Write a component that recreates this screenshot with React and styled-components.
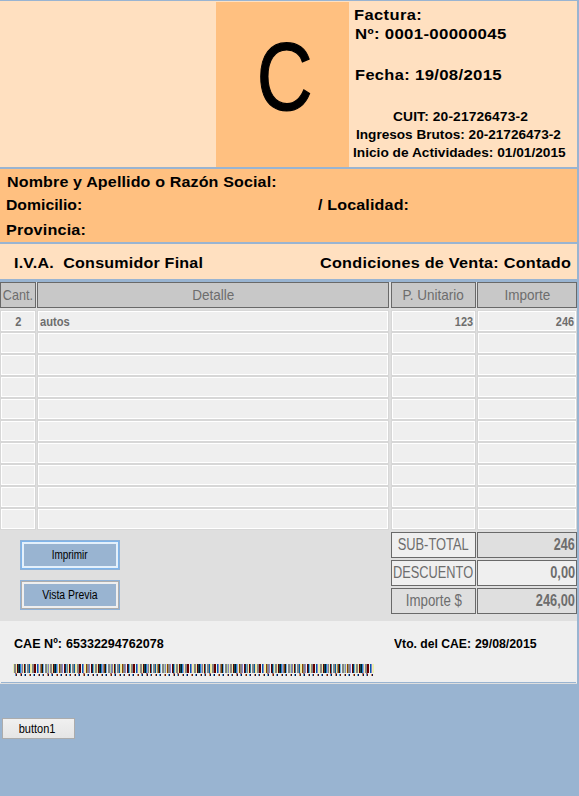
import React from 'react';
import styled, { createGlobalStyle } from 'styled-components';

const Global = createGlobalStyle`
  * { box-sizing: border-box; }
  body { margin: 0; background: #99b4d1; }
`;

const Page = styled.main`
  width: 579px;
  height: 796px;
  overflow: hidden;
  background: #99b4d1;
  font-family: 'Liberation Sans', Arial, sans-serif;
  color: #000;
`;

const Invoice = styled.div`
  width: 577px;
  padding-top: 1px;
`;

const Text = styled.span`
  display: block;
  flex: none;
  white-space: pre;
  font-size: ${p => p.$size || 15}px;
  font-weight: ${p => (p.$regular ? 400 : 700)};
  letter-spacing: ${p => p.$spacing || 0}px;
  transform: scaleX(${p => p.$scale || 1});
  transform-origin: ${p => p.$origin || 'left'} center;
`;

const Letter = styled(Text)`
  -webkit-text-stroke: 1.2px #000;
`;

const Header = styled.header`
  display: grid;
  grid-template-columns: 216px 133px 1fr;
  height: 166px;
  background: #ffe0c0;
`;

const LetterBox = styled.div`
  margin-top: 1px;
  padding: 20px 0 0 4px;
  background: #ffc080;
  display: flex;
  justify-content: center;
  line-height: 110px;
`;

const HeaderInfo = styled.div`
  padding-top: 5px;
`;

const Line = styled.div`
  display: flex;
  height: 18px;
  line-height: 18px;
  margin-top: ${p => p.$gap || 0}px;
  padding-left: ${p => p.$indent || 0}px;
`;

const Slot = styled.div`
  width: ${p => p.$width}px;
  flex: none;
`;

const Customer = styled.section`
  height: 75px;
  border-top: 2px solid #99b4d1;
  padding-top: 4px;
  background: #ffc080;
`;

const Terms = styled.section`
  height: 37px;
  border-top: 2px solid #99b4d1;
  padding-top: 10px;
  background: #ffe0c0;
`;

const Lower = styled.div`
  margin-top: 3px;
  background: #dfdfdf;
`;

const GridRow = styled.div`
  display: grid;
  grid-template-columns: 36px 352px 85px 100px;
  column-gap: 1px;
  justify-content: space-between;
  color: #6d6d6d;
`;

const TableHead = styled(GridRow)`
  height: 28px;
`;

const HeadCell = styled.div`
  height: 26px;
  border: 1px solid #696969;
  background: #c8c8c8;
  display: flex;
  justify-content: center;
  line-height: 24px;
`;

const Cell = styled.div`
  height: 22px;
  border: 1px solid #d7d7d7;
  box-shadow: inset 0 0 0 1px #fff;
  background: #efefef;
  display: flex;
  justify-content: ${p => p.$align || 'flex-start'};
  padding: 0 2px;
  line-height: 22px;
`;

const Summary = styled.div`
  display: flex;
  justify-content: space-between;
  height: 91px;
  padding: 2px 0 0 20px;
`;

const Actions = styled.div`
  padding-top: 8px;
  display: grid;
  grid-auto-rows: 30px;
  row-gap: 10px;
  width: 100px;
  align-content: start;
`;

const ActionButton = styled.button`
  appearance: none;
  font: inherit;
  color: #000;
  padding: 0;
  display: flex;
  justify-content: center;
  align-items: center;
  border: 1px solid #8fb2d8;
  background: #99b4d1;
  box-shadow: inset 0 0 0 1px ${p => (p.$focused ? '#7eb4ea' : '#adadad')},
    inset 0 0 0 3px ${p => (p.$focused ? '#e4f0fb' : '#efefef')};
  line-height: 26px;
`;

const Totals = styled.div`
  width: 186px;
  display: grid;
  grid-template-columns: 85px 100px;
  grid-auto-rows: 26px;
  gap: 2px 1px;
  align-content: start;
`;

const TotalCell = styled.div`
  border: 1px solid #696969;
  background: ${p => (p.$dim ? '#dfdfdf' : '#efefef')};
  color: #6d6d6d;
  display: flex;
  justify-content: ${p => (p.$right ? 'flex-end' : 'center')};
  padding-right: ${p => (p.$right ? 1 : 0)}px;
  line-height: 24px;
`;

const Footer = styled.footer`
  height: 63px;
  background: #efefef;
  padding-top: 14px;
  border-bottom: 1px solid #dfdfdf;
`;

const Barcode = styled.svg`
  display: block;
  margin: 11px 0 0 13px;
`;

const FooterRule = styled.div`
  height: 1px;
  margin: 6px 1px 0;
  background: #99b4d1;
`;

const PlainButton = styled.button`
  appearance: none;
  font: inherit;
  color: #000;
  display: flex;
  justify-content: center;
  width: 73px;
  height: 21px;
  margin: 34px 0 0 2px;
  padding: 0 2px 0 0;
  border: 1px solid #acacac;
  background: linear-gradient(#f0f0f0, #e5e5e5);
  line-height: 20px;
`;

// Each digit spans 4.5px: two digits share one nine-pixel group of stripes.
const stripes = [
  ['#e8eeae', '#858585', '#858585', '#f0efaa', '#620000', '#174a50', '#00172b', '#1889c8', '#a29cdf'],
  ['#efefaf', '#858585', '#858585', '#650000', '#650000', '#efefef', '#0060a8', '#8781ce', '#f2efb0'],
  ['#858585', '#8b4300', '#00172b', '#70b6e5', '#efefef', '#858585', '#858585', '#b1d5a3', '#8781ce'],
  ['#858585', '#efefaf', '#650000', '#287d98', '#efefef', '#858585', '#858585', '#005ca6', '#e9e5a0'],
  ['#efefaf', '#8b4300', '#858585', '#858585', '#8781ce', '#f2f2f2', '#650000', '#00345b', '#66b0dc'],
];
const order = [0, 3, 1, 2, 0, 4, 3, 1, 4, 0, 2, 3, 4, 1, 0, 3, 2, 4, 0, 1];

const BarcodeGraphic = () => (
  <Barcode width="361" height="12" shapeRendering="crispEdges" aria-label="65332294762078">
    {Array.from({ length: 361 }, (_, x) => (
      <rect key={x} x={x} width="1" height="9" fill={stripes[order[Math.floor(x / 9) % 20]][x % 9]} />
    ))}
    {Array.from({ length: 80 }, (_, i) => {
      const x = Math.round(i * 4.5) + 2;
      return (
        <g key={i}>
          <rect x={x} y="10" width="1" height="2" fill={i % 2 ? '#c88a5c' : '#52a1d8'} />
          <rect x={x + 1} y="10" width="1" height="2" fill={i % 3 ? '#10103e' : '#5a1a10'} />
          {i % 7 < 2 && <rect x={x} y="9" width="2" height="1" fill="#a76d70" />}
        </g>
      );
    })}
  </Barcode>
);

const rows = [{ qty: '2', detail: 'autos', unit: '123', amount: '246' }, ...Array(9).fill({})];

const ItemRow = ({ item }) => (
  <GridRow>
    <Cell $align="center"><Text $size={12} $scale={0.92} $origin="center">{item.qty}</Text></Cell>
    <Cell><Text $size={12} $scale={0.93}>{item.detail}</Text></Cell>
    <Cell $align="flex-end"><Text $size={12} $scale={0.91} $origin="right">{item.unit}</Text></Cell>
    <Cell $align="flex-end"><Text $size={12} $scale={0.91} $origin="right">{item.amount}</Text></Cell>
  </GridRow>
);

const Total = ({ label, value, scale, valueScale, dimLabel, dimValue }) => (
  <>
    <TotalCell $dim={dimLabel}><Text $regular $size={16} $scale={scale} $origin="center">{label}</Text></TotalCell>
    <TotalCell $right $dim={dimValue}><Text $size={16} $scale={valueScale} $origin="right">{value}</Text></TotalCell>
  </>
);

export default function App() {
  return (
    <Page>
      <Global />
      <Invoice>
        <Header>
          <div />
          <LetterBox><Letter $regular $size={96} $scale={0.806} $origin="center">C</Letter></LetterBox>
          <HeaderInfo>
            <Line $indent={5}><Text $scale={1.1} $spacing={0.35}>Factura:</Text></Line>
            <Line $gap={1} $indent={6}><Text $scale={1.12} $spacing={0.28}>Nº: 0001-00000045</Text></Line>
            <Line $gap={23} $indent={6}>
              <Slot $width={60}><Text $scale={1.09} $spacing={0.36}>Fecha:</Text></Slot>
              <Text $scale={1.12} $spacing={0.26}>19/08/2015</Text>
            </Line>
            <Line $gap={24} $indent={44}><Text $size={13} $scale={1.06} $spacing={0.12}>CUIT: 20-21726473-2</Text></Line>
            <Line $indent={7}><Text $size={13} $scale={1.046}>Ingresos Brutos: 20-21726473-2</Text></Line>
            <Line $indent={4}><Text $size={13} $scale={1.054}>Inicio de Actividades: 01/01/2015</Text></Line>
          </HeaderInfo>
        </Header>
        <Customer>
          <Line $indent={7}><Text $scale={1.07} $spacing={0.13}>Nombre y Apellido o Razón Social:</Text></Line>
          <Line $gap={5} $indent={6}>
            <Slot $width={312}><Text $scale={1.05}>Domicilio:</Text></Slot>
            <Text $scale={1.07} $spacing={0.15}>/ Localidad:</Text>
          </Line>
          <Line $gap={7} $indent={6}><Text $scale={1.08} $spacing={0.16}>Provincia:</Text></Line>
        </Customer>
        <Terms>
          <Line $indent={14}>
            <Slot $width={306}><Text $scale={1.07} $spacing={0.2}>{'I.V.A.  Consumidor Final'}</Text></Slot>
            <Text $scale={1.08} $spacing={0.23}>Condiciones de Venta: Contado</Text>
          </Line>
        </Terms>
        <Lower>
          <TableHead>
            <HeadCell><Text $regular $scale={0.84} $origin="center">Cant.</Text></HeadCell>
            <HeadCell><Text $regular $scale={0.9} $origin="center">Detalle</Text></HeadCell>
            <HeadCell><Text $regular $scale={0.9} $origin="center">P. Unitario</Text></HeadCell>
            <HeadCell><Text $regular $scale={0.9} $origin="center">Importe</Text></HeadCell>
          </TableHead>
          {rows.map((item, i) => <ItemRow key={i} item={item} />)}
          <Summary>
            <Actions>
              <ActionButton $focused><Text $regular $size={12} $scale={0.83} $origin="center">Imprimir</Text></ActionButton>
              <ActionButton><Text $regular $size={12} $scale={0.87} $origin="center">Vista Previa</Text></ActionButton>
            </Actions>
            <Totals>
              <Total label="SUB-TOTAL" value="246" scale={0.803} valueScale={0.784} dimValue />
              <Total label="DESCUENTO" value="0,00" scale={0.8} valueScale={0.8} />
              <Total label="Importe $" value="246,00" scale={0.83} valueScale={0.8} dimLabel dimValue />
            </Totals>
          </Summary>
        </Lower>
        <Footer>
          <Line $indent={14}>
            <Slot $width={52}><Text $size={12} $scale={1.05}>CAE Nº:</Text></Slot>
            <Slot $width={328}><Text $size={12} $scale={1.045}>65332294762078</Text></Slot>
            <Slot $width={81}><Text $size={12} $scale={1.013}>Vto. del CAE:</Text></Slot>
            <Text $size={12} $scale={1.027}>29/08/2015</Text>
          </Line>
          <BarcodeGraphic />
          <FooterRule />
        </Footer>
      </Invoice>
      <PlainButton><Text $regular $size={12} $scale={0.917} $origin="center">button1</Text></PlainButton>
    </Page>
  );
}
